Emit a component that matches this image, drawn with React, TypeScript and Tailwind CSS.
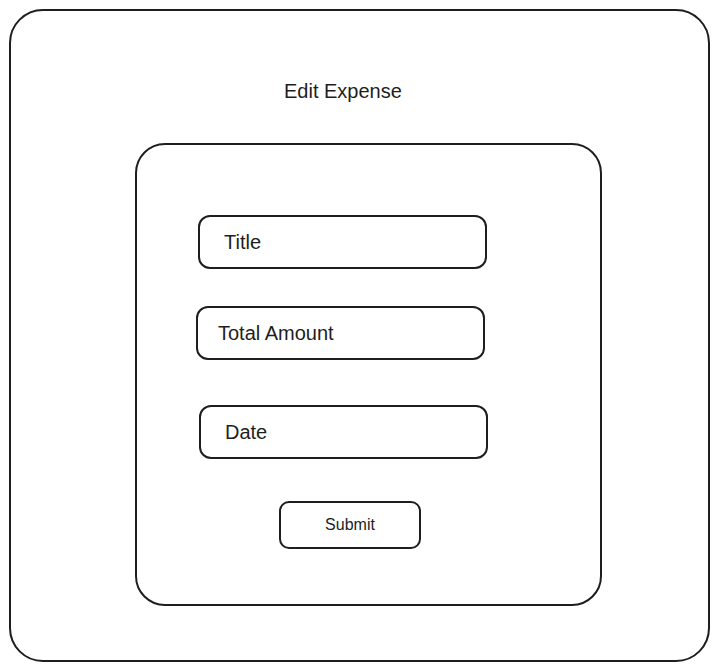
const fields = [
  { label: "Title", box: "ml-[61px] mt-[70px]", text: "pl-[24px]" },
  { label: "Total Amount", box: "ml-[59px] mt-[37px]", text: "pl-[20px]" },
  { label: "Date", box: "ml-[62px] mt-[45px]", text: "pl-[24px]" },
];

export default function App() {
  return (
    <div className="w-[719px] h-[670px] bg-white pt-[9px] pl-[9px] font-['Liberation_Sans',Arial,sans-serif] text-[#1e1e1e]">
      <div className="w-[701px] h-[653px] border-2 border-[#1e1e1e] rounded-[34px] flex flex-col">
        <h1 className="mt-[68px] ml-[273px] text-[20px] leading-[25px]">Edit Expense</h1>
        <div className="mt-[39px] ml-[124px] w-[467px] h-[463px] border-2 border-[#1e1e1e] rounded-[30px] flex flex-col">
          {fields.map((f) => (
            <div
              key={f.label}
              className={`${f.box} w-[289px] h-[54px] border-2 border-[#1e1e1e] rounded-[12px] flex items-center ${f.text} text-[20px]`}
            >
              {f.label}
            </div>
          ))}
          <button className="mt-[42px] ml-[142px] w-[142px] h-[48px] border-2 border-[#1e1e1e] rounded-[10px] text-[16px] flex items-center justify-center">
            Submit
          </button>
        </div>
      </div>
    </div>
  );
}
